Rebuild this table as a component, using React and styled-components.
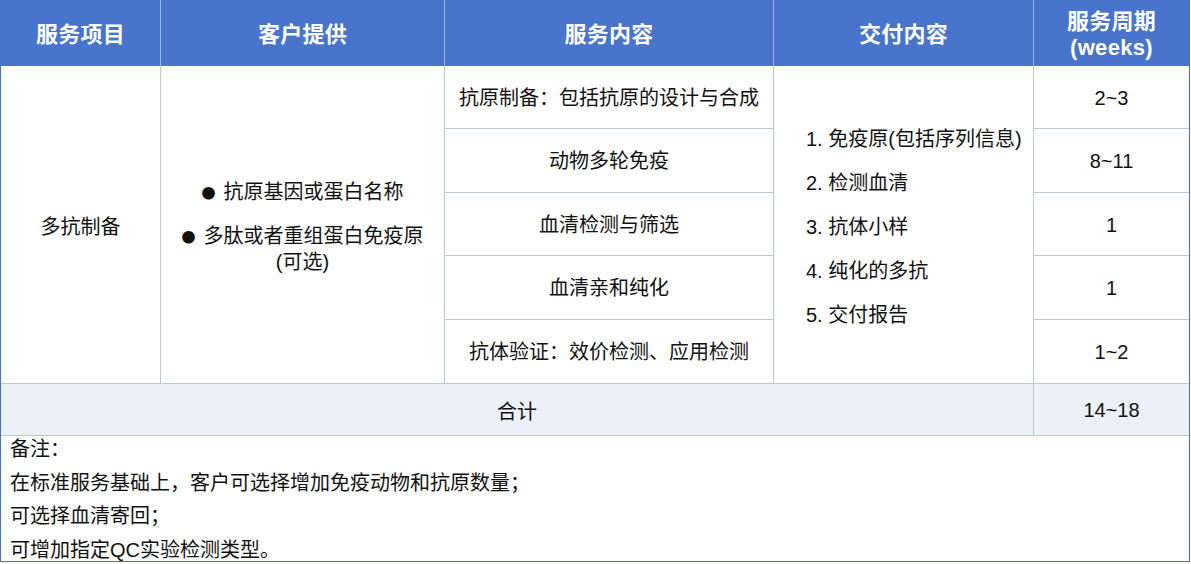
import styled, { createGlobalStyle } from 'styled-components';

const GlobalStyle = createGlobalStyle`
  html, body {
    margin: 0;
    padding: 0;
    background: #ffffff;
  }
  body {
    font-family: "Liberation Sans", "Noto Sans CJK SC", sans-serif;
    color: #111111;
  }
`;

const deliverables = ['1. 免疫原(包括序列信息)', '2. 检测血清', '3. 抗体小样', '4. 纯化的多抗', '5. 交付报告'];

const steps = [
  { name: '抗原制备：包括抗原的设计与合成', weeks: '2~3' },
  { name: '动物多轮免疫', weeks: '8~11' },
  { name: '血清检测与筛选', weeks: '1' },
  { name: '血清亲和纯化', weeks: '1' },
  { name: '抗体验证：效价检测、应用检测', weeks: '1~2' },
];

const notes = [
  '备注：',
  '在标准服务基础上，客户可选择增加免疫动物和抗原数量；',
  '可选择血清寄回；',
  '可增加指定QC实验检测类型。',
];

const App = () => {
  return (
    <>
      <GlobalStyle />
      <Table>
        <HeadCell>服务项目</HeadCell>
        <HeadCell>客户提供</HeadCell>
        <HeadCell>服务内容</HeadCell>
        <HeadCell>交付内容</HeadCell>
        <HeadCell $last>
          服务周期
          <br />
          (weeks)
        </HeadCell>

        <Cell $col="1" $row="2 / span 5" $shift>多抗制备</Cell>
        <Cell $col="2" $row="2 / span 5">
          <Bullets>
            <li>
              <Dot>●</Dot>抗原基因或蛋白名称
            </li>
            <li>
              <Dot>●</Dot>多肽或者重组蛋白免疫原
              <br />
              (可选)
            </li>
          </Bullets>
        </Cell>
        <Cell $col="4" $row="2 / span 5" $shift>
          <Deliverables>
            {deliverables.map((d) => (
              <li key={d}>{d}</li>
            ))}
          </Deliverables>
        </Cell>
        {steps.map((s, i) => (
          <StepGroup key={s.name}>
            <Cell $col="3" $row={`${i + 2}`}>{s.name}</Cell>
            <Cell $col="5" $row={`${i + 2}`} $last>{s.weeks}</Cell>
          </StepGroup>
        ))}

        <SumCell $col="1 / span 4">合计</SumCell>
        <SumCell $col="5" $last>14~18</SumCell>

        <Notes>
          {notes.map((n) => (
            <NoteLine key={n}>{n}</NoteLine>
          ))}
        </Notes>
      </Table>
    </>
  );
};

const Table = styled.div`
  display: grid;
  grid-template-columns: 160px 284px 329px 260px 155px;
  grid-template-rows: 66px 63px 64px 63px 64px 64px 52px auto;
  width: 1190px;
  box-sizing: border-box;
  border-left: 1px solid #4472c4;
  border-right: 1px solid #4472c4;
  border-bottom: 1px solid #4472c4;
  font-size: 20px;
`;

const HeadCell = styled.div`
  background: #4874cb;
  color: #ffffff;
  font-weight: bold;
  font-size: 22px;
  line-height: 26px;
  letter-spacing: 0.3px;
  display: flex;
  align-items: center;
  justify-content: center;
  text-align: center;
  border-right: ${(p) => (p.$last ? 'none' : '1px solid #9db5e6')};
  padding-top: 3px;
`;

const StepGroup = styled.div`
  display: contents;
`;

const Cell = styled.div`
  grid-column: ${(p) => p.$col};
  grid-row: ${(p) => p.$row};
  display: flex;
  align-items: center;
  justify-content: center;
  text-align: center;
  border-right: ${(p) => (p.$last ? 'none' : '1px solid #b4c7e7')};
  border-bottom: 1px solid #b4c7e7;
  line-height: 26px;
  padding-top: ${(p) => (p.$shift ? '4px' : '1px')};
`;

const Bullets = styled.ul`
  list-style: none;
  margin: 0;
  padding: 4px 0 0;
  display: flex;
  flex-direction: column;
  gap: 18px;
  text-align: center;
`;

const Dot = styled.span`
  font-family: "Noto Sans CJK SC", sans-serif;
  font-size: 14px;
  margin-right: 8px;
  vertical-align: 1px;
`;

const Deliverables = styled.ol`
  list-style: none;
  margin: 0;
  padding: 0;
  width: 100%;
  padding-left: 32px;
  box-sizing: border-box;
  text-align: left;
  display: flex;
  flex-direction: column;
  gap: 18px;
`;

const SumCell = styled.div`
  grid-column: ${(p) => p.$col};
  grid-row: 7;
  background: #ebf0f9;
  display: flex;
  align-items: center;
  justify-content: center;
  padding-top: 1px;
  border-right: ${(p) => (p.$last ? 'none' : '1px solid #b4c7e7')};
  border-bottom: 1px solid #b4c7e7;
`;

const Notes = styled.div`
  grid-column: 1 / -1;
  grid-row: 8;
  padding: 0 0 0 9px;
  height: 125px;
  overflow: hidden;
`;

const NoteLine = styled.div`
  line-height: 33.6px;
  &:first-child {
    margin-top: -3px;
  }
`;

export default App;
